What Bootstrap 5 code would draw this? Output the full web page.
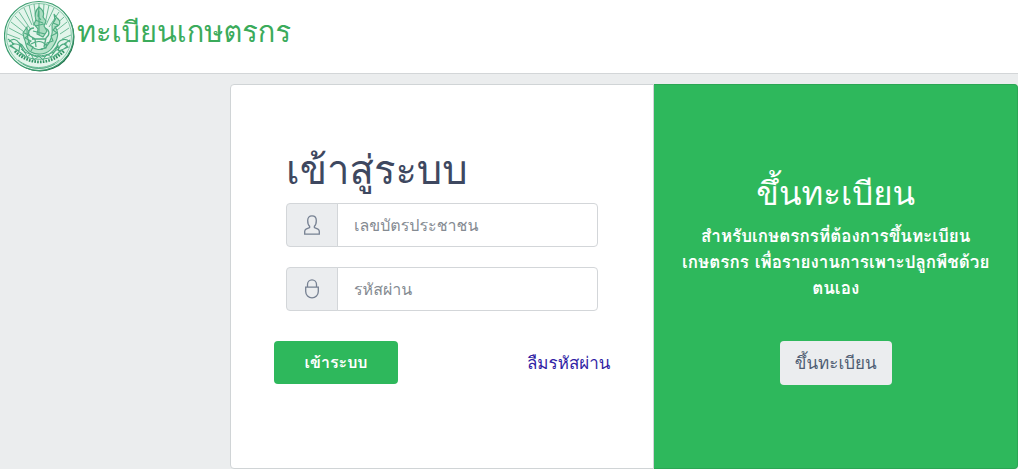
<!DOCTYPE html>
<html lang="th">
<head>
<meta charset="utf-8">
<meta name="viewport" content="width=device-width, initial-scale=1">
<title>ทะเบียนเกษตรกร</title>
<link href="https://cdn.jsdelivr.net/npm/bootstrap@5.3.0/dist/css/bootstrap.min.css" rel="stylesheet">
<style>
  body { background: #ebedee; color: #3e4860; font-family: Loma, "Liberation Sans", sans-serif; font-size: 17px; line-height: 26px; }
  .site-bar { border-bottom: 1px solid #d3d6d8; height: 74px; }
  .site-title { color: #3bab5b; font-size: 29px; line-height: 40px; }
  .site-title:hover { color: #3bab5b; }
  .login-wrap { margin-left: 230px; padding-top: 10px; }
  .login-group { height: 385px; }
  .login-group > .card { border-color: #d0d4d6; border-radius: 4px; }
  .signin { flex: 424 1 0 !important; }
  .signup { flex: 364 1 0 !important; background: #2eb85c; border-color: #2ba654 !important; }
  .signin .card-body { padding: 60px 55px 0; }
  .signup .card-body { padding: 86px 24px 0; }
  .signin h1 { font-size: 40px; line-height: 50px; margin: 0 0 8px; }
  .signup h2 { font-size: 33px; line-height: 46px; margin: 0 0 6px; }
  .signin .input-group-text { width: 52px; background: #ebedef; border-color: #d3d6d9; border-radius: 4px; color: #768192; }
  .signin .form-control { height: 44px; border-color: #d3d6d9; border-radius: 4px; font-size: 16px; padding: 0 16px; }
  .signin .form-control::placeholder { color: #858b92; }
  .signin .input-group + .input-group { margin-top: 20px; }
  .actions { margin: 30px -12px 0; }
  .btn { font-size: 17px; line-height: 26px; border: 0; border-radius: 4px; padding: 0; }
  .actions .btn { width: 124px; height: 43px; background: #2eb85c; color: #fff; font-size: 16px; }
  .actions a { color: #321fa5; }
  .signup p { margin: 0 0 40px; }
  .signup .btn { width: 112px; height: 44px; background: #ebedef; color: #4f5d73; }
</style>
</head>
<body>
<header class="site-bar bg-white">
  <a class="site-title d-flex align-items-start text-decoration-none ps-1" href="#">
    <svg class="flex-shrink-0" width="73" height="73" viewBox="0 0 73 73" fill="none" stroke="#4fac82" aria-hidden="true">
      <circle cx="36" cy="37" r="34.500" fill="#1d6b45" stroke="none"/>
      <circle cx="35" cy="36" r="34.500" fill="#e3f5eb" stroke="#3b9c6f" stroke-width="1.200"/>
      <circle cx="35" cy="36" r="32.500" stroke-width=".6"/>
      <g stroke-width=".8">
        <path d="M35 3v8M30 4l2 15M25 5l5 21M20 8l8 17M15 12l12 18M11 16l14 15M7 22l17 13M5 28l15 8M3 34l13 5M40 4l-1 15M45 5l-4 19M50 8l-8 17M55 12l-10 15M60 17L48 28M63 22L53 30M65 28l-9 6M67 35l-9 4"/>
      </g>
      <path d="M35 7c-4 4-5 8-3 13l-2 4 4 5-1 5 6 3 4-6-3-5 2-5-3-4c2-4 0-7-4-10z" fill="#a8dcc0" stroke-width="1.100"/>
      <path d="M35 11v24M31 20l8 3M31 26l9-2M29 31l12 3M35 8l-1 8 3 4" stroke-width="1.100"/>
      <path d="M30 28c-5 0-7 5-4 8l5 3 1 8M41 28c5 2 5 7 1 10l-2 9M28 39h14M27 44c6-4 12-3 16 2" stroke-width="1.300"/>
      <path d="M23 27l-4 6 1 5c3 6 1 11 7 14 7 4 17 2 21-4 5-7 8-15 3-21 6-1 6-6 2-9l-3-4 1 6-3 5c1 9-1 17-6 22-5 4-11 3-15-1-4-5-4-12-4-19z" fill="#b7e3ca" stroke-width="1.100"/>
      <path d="M20 33l5 2-4 3 6 3-4 3 6 3-2 4M52 18l-3 5 5 2-5 5 4 3-6 3 2 5-6 2-1 5-5 1" stroke-width="1.100"/>
      <path d="M5 42c4-5 8-2 10 1l3 2c3 6 11 12 18 12s13-5 17-11c1-6 8-9 13-4M8 44c6-1 10 2 11 7M63 44c-5-1-8 2-9 7M4 39l6 5-4 2 9 5 1-7 5 9M66 40l-6 4 4 3-9 4-1-5-5 8M6 45l15 11M64 46L50 56" stroke-width="1.200"/>
      <path d="M17 49c10 9 26 9 37 0M16 54c11 7 27 7 39 0M21 52l2 5 4-3 3 6 5-4 4 4 4-6 4 3 3-5"/>
      <path d="M11 51c13 14 35 15 49 0" stroke="#2f9364" stroke-width="2.800" stroke-dasharray="1.600 1.200"/>
      <path d="M14 60c12 10 29 10 41 0M19 64c10 6 22 6 32 0" stroke-width=".8"/>
    </svg>
    <span class="pt-2 mt-1">ทะเบียนเกษตรกร</span>
  </a>
</header>
<main class="login-wrap">
  <div class="card-group login-group d-flex">
    <section class="card signin">
      <form class="card-body">
        <h1 class="fw-normal">เข้าสู่ระบบ</h1>
        <div class="input-group">
          <label class="input-group-text justify-content-center p-0" for="citizen" aria-label="เลขบัตรประชาชน">
            <svg width="20" height="20" viewBox="0 0 20 20" fill="none" stroke="currentColor" stroke-width="1.300"><path d="M7.600 11.300C5.900 9.900 5.700 7.800 5.700 5.500c0-2.900 1.500-4.700 4.300-4.700s4.300 1.800 4.300 4.700c0 2.300-.2 4.400-1.900 5.800v1.200l3.600 1.600c1 .5 1.300 1.200 1.300 2.300v2.700H2.700v-2.700c0-1.100.3-1.800 1.300-2.300l3.600-1.600z"/></svg>
          </label>
          <input class="form-control" id="citizen" type="text" placeholder="เลขบัตรประชาชน">
        </div>
        <div class="input-group">
          <label class="input-group-text justify-content-center p-0" for="password" aria-label="รหัสผ่าน">
            <svg width="20" height="20" viewBox="0 0 20 20" fill="none" stroke="currentColor" stroke-width="1.300"><path d="M3.700 8.100h12.600v4.400a6.300 6.300 0 0 1-12.600 0zM5.500 8V5.400a4.500 4.500 0 0 1 9 0V8"/></svg>
          </label>
          <input class="form-control" id="password" type="password" placeholder="รหัสผ่าน">
        </div>
        <div class="actions d-flex justify-content-between align-items-center">
          <button class="btn fw-semibold" type="submit">เข้าระบบ</button>
          <a class="text-decoration-none" href="#">ลืมรหัสผ่าน</a>
        </div>
      </form>
    </section>
    <section class="card signup text-white text-center">
      <div class="card-body">
        <h2>ขึ้นทะเบียน</h2>
        <p class="fw-semibold">สำหรับเกษตรกรที่ต้องการขึ้นทะเบียนเกษตรกร เพื่อรายงานการเพาะปลูกพืชด้วยตนเอง</p>
        <button class="btn" type="button">ขึ้นทะเบียน</button>
      </div>
    </section>
  </div>
</main>
<script src="https://cdn.jsdelivr.net/npm/bootstrap@5.3.0/dist/js/bootstrap.bundle.min.js"></script>
</body>
</html>
